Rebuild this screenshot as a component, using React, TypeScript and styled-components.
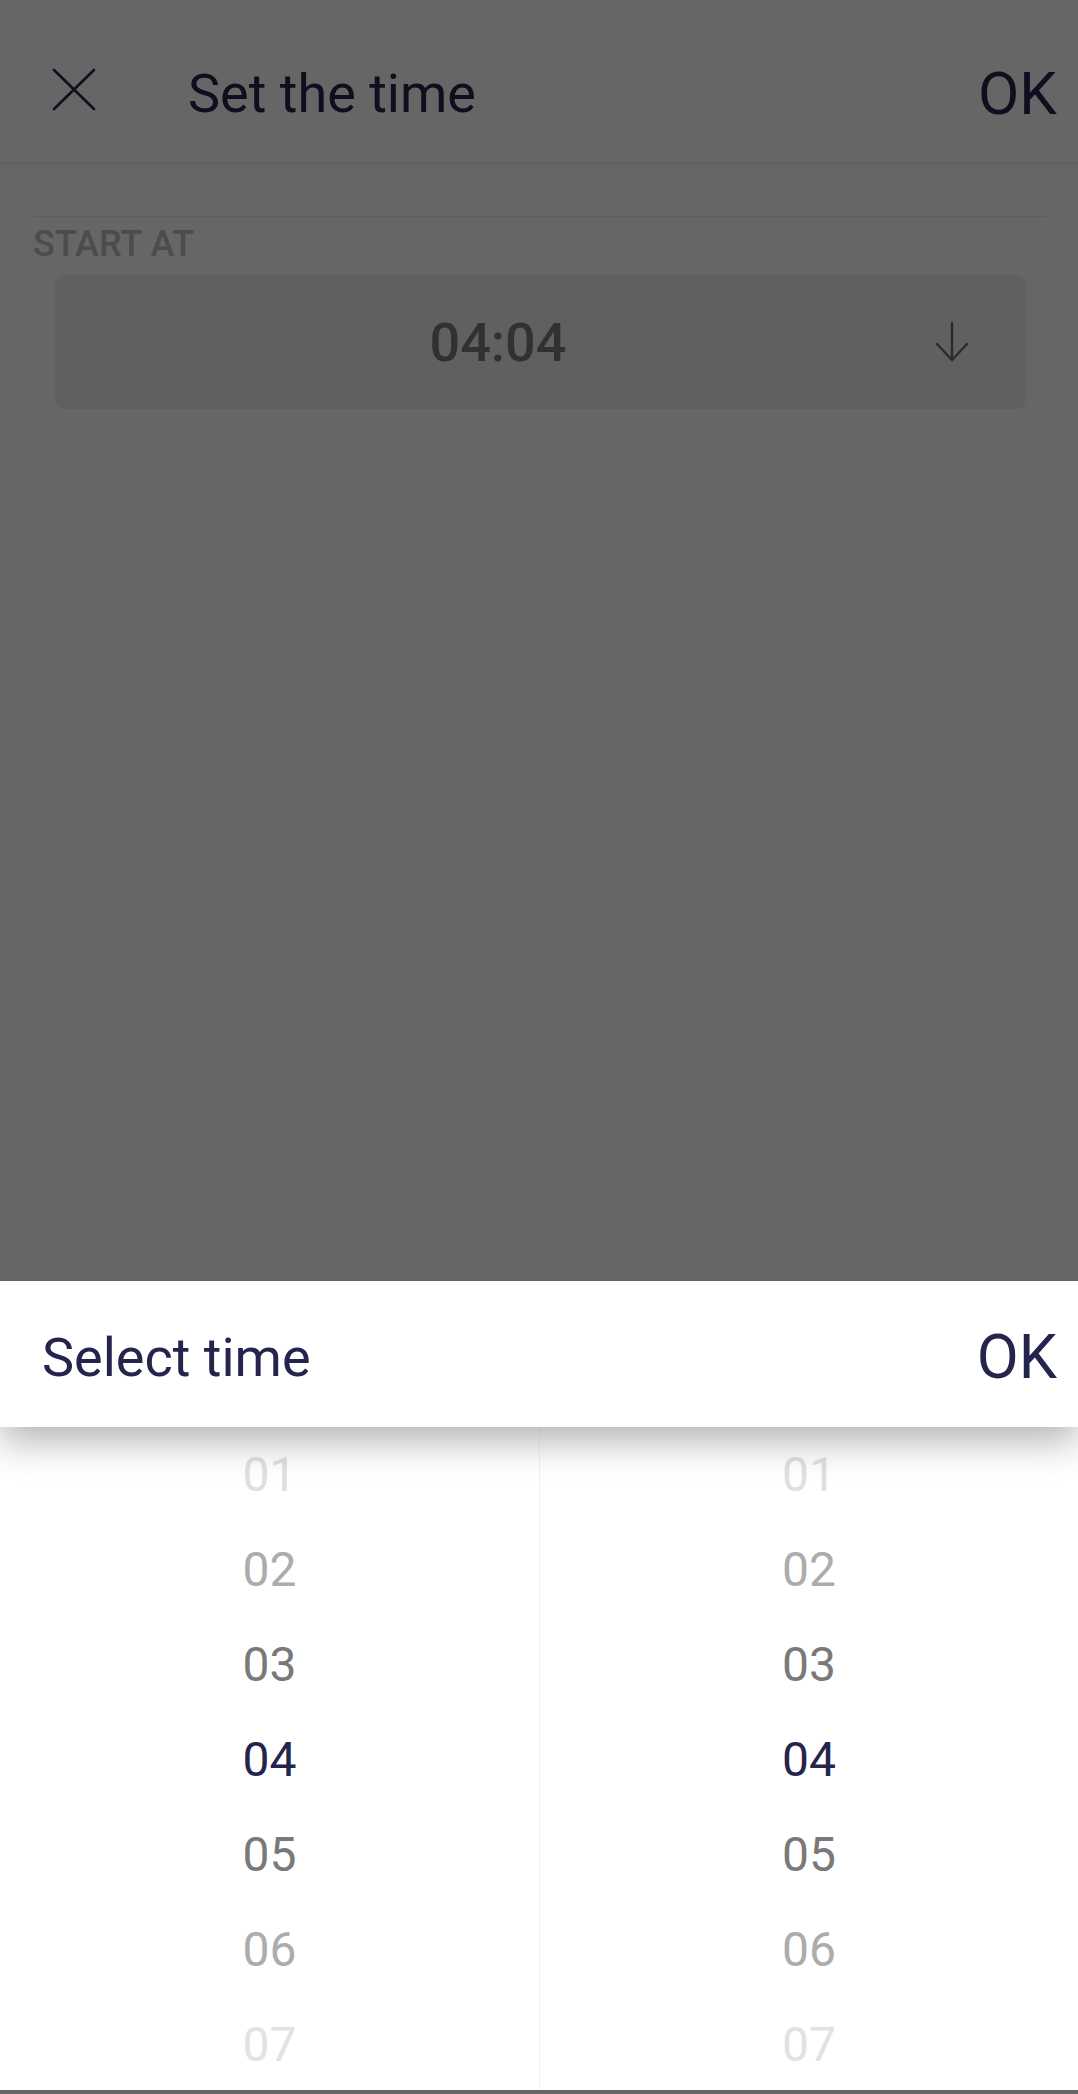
import React from "react";
import styled, { createGlobalStyle } from "styled-components";

const GlobalStyle = createGlobalStyle`
    html, body {
        margin: 0;
        padding: 0;
        background: #ffffff;
        font-family: Roboto, "Noto Sans", "Liberation Sans", sans-serif;
    }
    * {
        box-sizing: border-box;
    }
`;

const NAVY = "#24244c";

const Page = styled.div`
    position: relative;
    width: 100%;
    min-height: 100vh;
    background: #ffffff;
    overflow: hidden;
`;

const AppBar = styled.header`
    height: 162px;
    display: flex;
    align-items: center;
    padding: 24px 21px 0 52px;
    background: #ffffff;
    box-shadow: 0 1px 4px rgba(0, 0, 0, 0.1);
`;

const IconButton = styled.button`
    display: flex;
    align-items: center;
    justify-content: center;
    padding: 0;
    margin-top: -8px;
    border: none;
    background: none;
    color: ${NAVY};
`;

const BarTitle = styled.h1`
    flex: 1;
    margin: 0 0 0 92px;
    font-size: 54px;
    font-weight: 400;
    color: ${NAVY};
`;

const TextAction = styled.button<{ $size: number }>`
    padding: 0;
    border: none;
    background: none;
    font-family: inherit;
    font-size: ${({ $size }) => $size}px;
    font-weight: 400;
    color: ${NAVY};
`;

const Content = styled.main`
    margin-top: 54px;
    padding: 0 32px 0 33px;
`;

const Divider = styled.hr`
    margin: 0;
    border: none;
    border-top: 1px solid #ececec;
`;

const SectionLabel = styled.div`
    margin-top: 7px;
    font-size: 36px;
    line-height: 40px;
    font-weight: 500;
    color: #bdbdbd;
`;

const FieldWrap = styled.div`
    margin-top: 11px;
    padding: 0 20px 0 22px;
`;

const TimeField = styled.div`
    height: 134px;
    display: flex;
    align-items: center;
    padding-right: 51px;
    border-radius: 10px;
    background: #f0f0f0;
`;

const TimeValue = styled.div`
    flex: 1;
    padding-left: 12px;
    text-align: center;
    font-size: 54px;
    font-weight: 500;
    color: #7c7c7c;
`;

const ArrowSlot = styled.div`
    width: 46px;
    display: flex;
    justify-content: center;
    color: #6c6c6c;
`;

const Overlay = styled.div`
    position: fixed;
    inset: 0;
    display: flex;
    flex-direction: column;
    justify-content: flex-end;
    padding-bottom: 4px;
    background: rgba(0, 0, 0, 0.6);
`;

const Sheet = styled.section`
    display: flex;
    flex-direction: column;
    background: #ffffff;
    height: 809px;
    overflow: hidden;
`;

const SheetHeader = styled.div`
    position: relative;
    z-index: 1;
    height: 146px;
    flex-shrink: 0;
    display: flex;
    align-items: center;
    justify-content: space-between;
    padding: 6px 21px 0 42px;
    background: #ffffff;
    box-shadow: 0 14px 36px rgba(0, 0, 0, 0.3);
`;

const SheetTitle = styled.div`
    font-size: 54px;
    color: ${NAVY};
`;

const Wheels = styled.div`
    flex: 1;
    display: grid;
    grid-template-columns: 540px 1fr;
`;

const Wheel = styled.div<{ $divider?: boolean }>`
    display: flex;
    flex-direction: column;
    border-right: ${({ $divider }) => ($divider ? "1px solid #f3f3f3" : "none")};
`;

const WheelItem = styled.div<{ $tone: string }>`
    height: 95px;
    flex-shrink: 0;
    display: flex;
    align-items: center;
    justify-content: center;
    font-size: 48px;
    color: ${({ $tone }) => $tone};
`;

const tones = ["#e0e0e0", "#acacac", "#797979", NAVY, "#797979", "#acacac", "#e2e2e2"];
const values = ["01", "02", "03", "04", "05", "06", "07"];

const CloseIcon = () => (
    <svg width="44" height="43" viewBox="0 0 44 43" fill="none" stroke="currentColor" strokeWidth="2.6" strokeLinecap="round">
        <line x1="2" y1="2" x2="42" y2="41" />
        <line x1="42" y1="2" x2="2" y2="41" />
    </svg>
);

const DownArrow = () => (
    <svg width="34" height="40" viewBox="0 0 34 40" fill="none" stroke="currentColor" strokeWidth="2.4" strokeLinecap="round" strokeLinejoin="round">
        <line x1="17" y1="1" x2="17" y2="38" />
        <polyline points="2,22 17,38 32,22" />
    </svg>
);

const TimeWheel: React.FC<{ divider?: boolean }> = ({ divider }) => (
    <Wheel $divider={divider}>
        {values.map((v, i) => (
            <WheelItem key={v} $tone={tones[i]}>{v}</WheelItem>
        ))}
    </Wheel>
);

export default function App() {
    return (
        <Page>
            <GlobalStyle />
            <AppBar>
                <IconButton aria-label="close"><CloseIcon /></IconButton>
                <BarTitle>Set the time</BarTitle>
                <TextAction $size={60}>OK</TextAction>
            </AppBar>
            <Content>
                <Divider />
                <SectionLabel>START AT</SectionLabel>
                <FieldWrap>
                    <TimeField>
                        <TimeValue>04:04</TimeValue>
                        <ArrowSlot><DownArrow /></ArrowSlot>
                    </TimeField>
                </FieldWrap>
            </Content>
            <Overlay>
                <Sheet>
                    <SheetHeader>
                        <SheetTitle>Select time</SheetTitle>
                        <TextAction $size={61}>OK</TextAction>
                    </SheetHeader>
                    <Wheels>
                        <TimeWheel divider />
                        <TimeWheel />
                    </Wheels>
                </Sheet>
            </Overlay>
        </Page>
    );
}
